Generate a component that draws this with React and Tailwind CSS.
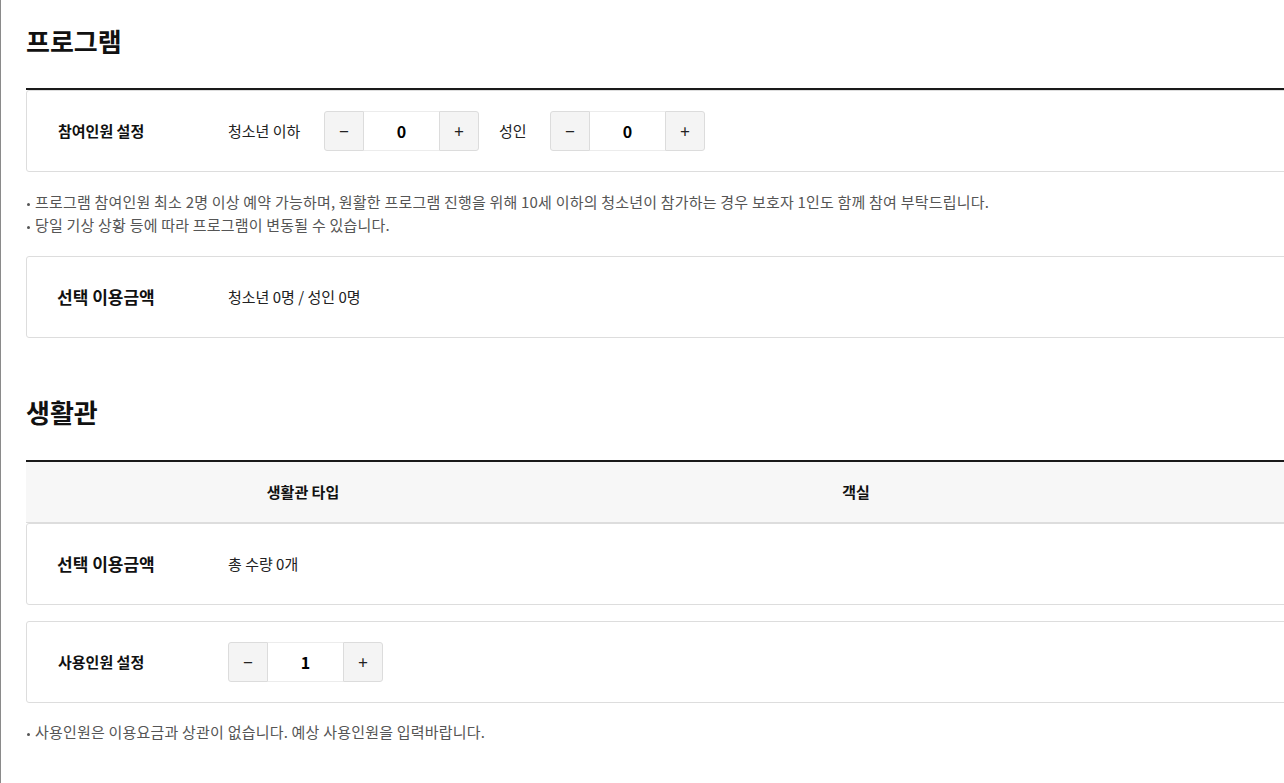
import React, { useState } from 'react';

const font = { fontFamily: '"Noto Sans CJK KR", "Noto Sans", sans-serif' };

const Stepper = ({ value, onChange, min = 0 }) => (
  <div className="flex h-10 items-stretch">
    <button
      onClick={() => onChange(Math.max(min, value - 1))}
      className="w-10 rounded-l-[3px] border border-[#dcdcdc] bg-[#f4f4f4] text-[17px] text-[#222]"
    >
      −
    </button>
    <div className="flex w-[75px] items-center justify-center border-y border-[#ececec] bg-white text-[16px] font-bold text-black">
      {value}
    </div>
    <button
      onClick={() => onChange(value + 1)}
      className="w-10 rounded-r-[3px] border border-[#dcdcdc] bg-[#f4f4f4] text-[17px] text-[#222]"
    >
      +
    </button>
  </div>
);

const Row = ({ label, big, children, className = '' }) => (
  <div className={`flex h-[82px] items-center rounded-[3px] border border-[#dddddd] bg-white ${className}`}>
    <div className={`w-[201px] font-bold text-[#111] ${big ? 'pl-[30px] text-[17px]' : 'pl-[31px] text-[15px]'}`}>{label}</div>
    <div className="flex items-center text-[15px] text-[#222]">{children}</div>
  </div>
);

const Note = ({ children }) => (
  <li className="flex items-center text-[15px] leading-[23px] tracking-[0.2px] text-[#555]">
    <span className="ml-[1px] mr-[5px] mt-[6px] inline-block h-[3px] w-[3px] rounded-full bg-[#555]"></span>
    {children}
  </li>
);

export default function App() {
  const [youth, setYouth] = useState(0);
  const [adult, setAdult] = useState(0);
  const [users, setUsers] = useState(1);

  return (
    <div style={font} className="h-[783px] w-[1284px] overflow-hidden border-l border-[#8a8a8a] bg-white">
      <div className="w-[1300px] pl-[25px]">
        <h2 className="pt-[22px] text-[26px] font-bold leading-[38px] text-[#111]">프로그램</h2>

        <div className="mt-[28px] border-t-2 border-[#1a1a1a]">
          <Row label="참여인원 설정">
            <span className="w-[96px]">청소년 이하</span>
            <Stepper value={youth} onChange={setYouth} />
            <span className="ml-[20px] w-[51px]">성인</span>
            <Stepper value={adult} onChange={setAdult} />
          </Row>
        </div>

        <ul className="mt-[18px] flex flex-col">
          <Note>프로그램 참여인원 최소 2명 이상 예약 가능하며, 원활한 프로그램 진행을 위해 10세 이하의 청소년이 참가하는 경우 보호자 1인도 함께 참여 부탁드립니다.</Note>
          <Note>당일 기상 상황 등에 따라 프로그램이 변동될 수 있습니다.</Note>
        </ul>

        <Row label="선택 이용금액" big className="mt-[20px]">
          청소년 {youth}명 / 성인 {adult}명
        </Row>

        <h2 className="mt-[55px] text-[26px] font-bold leading-[38px] text-[#111]">생활관</h2>

        <div className="mt-[29px] border-t-2 border-[#1a1a1a]">
          <div className="grid h-[61px] grid-cols-[554px_552px_1fr] items-center border-b border-[#dddddd] bg-[#f7f7f7] text-[15px] font-bold text-[#111]">
            <div className="text-center">생활관 타입</div>
            <div className="text-center">객실</div>
            <div></div>
          </div>
          <Row label="선택 이용금액" big>
            총 수량 0개
          </Row>
        </div>

        <Row label="사용인원 설정" className="mt-[16px]">
          <Stepper value={users} onChange={setUsers} min={1} />
        </Row>

        <ul className="mt-[17px] flex flex-col">
          <Note>사용인원은 이용요금과 상관이 없습니다. 예상 사용인원을 입력바랍니다.</Note>
        </ul>
      </div>
    </div>
  );
}
